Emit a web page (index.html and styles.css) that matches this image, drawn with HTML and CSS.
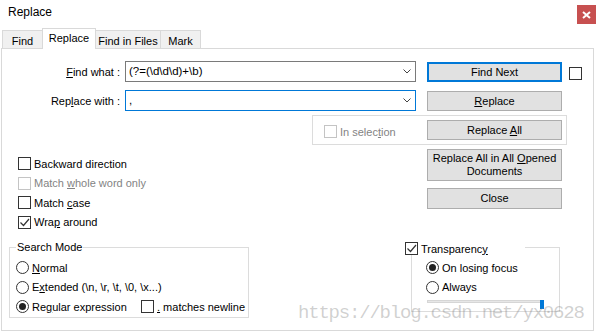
FILE: index.html
```html
<!DOCTYPE html>
<html lang="en">
<head>
    <meta charset="UTF-8">
    <meta name="viewport" content="width=device-width, initial-scale=1.0">
    <title>Replace</title>
    <link rel="stylesheet" href="styles.css">
</head>
<body>

<div class="dialog">
    <div class="titlebar">
        <span class="title">Replace</span>
        <span class="close-btn">
            <svg width="9" height="8" viewBox="0 0 9 8"><path d="M1 1 L8 7 M8 1 L1 7" stroke="#fff" stroke-width="2" fill="none"/></svg>
        </span>
    </div>

    <div class="tabs">
        <div class="tab tab-find">Find</div>
        <div class="tab tab-replace active">Replace</div>
        <div class="tab tab-files">Find in Files</div>
        <div class="tab tab-mark">Mark</div>
    </div>

    <div class="panel">
        <div class="row row-find">
            <div class="field">
                <label class="field-label"><u>F</u>ind what :</label>
                <div class="combo">
                    <span class="combo-text">(?=(\d\d\d)+\b)</span>
                    <svg class="chevron" width="8" height="5" viewBox="0 0 8 5"><path d="M0.5 0.5 L4 4 L7.5 0.5" stroke="#444" fill="none"/></svg>
                </div>
            </div>
            <button class="btn btn-default">Find Next</button>
            <span class="cb cb-side"></span>
        </div>

        <div class="row row-replace">
            <div class="field">
                <label class="field-label">Rep<u>l</u>ace with :</label>
                <div class="combo focused">
                    <span class="combo-text">,</span>
                    <svg class="chevron" width="8" height="5" viewBox="0 0 8 5"><path d="M0.5 0.5 L4 4 L7.5 0.5" stroke="#444" fill="none"/></svg>
                </div>
            </div>
            <button class="btn"><u>R</u>eplace</button>
        </div>

        <div class="selbox">
            <div class="sel-label disabled">
                <span class="cb"></span>
                <span class="opt-text">In selec<u>t</u>ion</span>
            </div>
            <button class="btn btn-sel">Replace <u>A</u>ll</button>
        </div>

        <div class="middle">
            <div class="options">
                <div class="opt"><span class="cb"></span><span class="opt-text">Backward direction</span></div>
                <div class="opt disabled"><span class="cb"></span><span class="opt-text">Match <u>w</u>hole word only</span></div>
                <div class="opt"><span class="cb"></span><span class="opt-text">Match <u>c</u>ase</span></div>
                <div class="opt"><span class="cb checked"><svg width="11" height="11" viewBox="0 0 11 11"><path d="M1.5 5.5 L4.5 8.5 L10 2" stroke="#333" stroke-width="1.2" fill="none"/></svg></span><span class="opt-text">Wra<u>p</u> around</span></div>
            </div>
            <div class="side-buttons">
                <button class="btn btn-tall">Replace All in All <u>O</u>pened<br>Documents</button>
                <button class="btn btn-close">Close</button>
            </div>
        </div>

        <div class="bottom">
            <fieldset class="search-mode">
                <legend>Search Mode</legend>
                <div class="opt"><span class="rb"></span><span class="opt-text"><u>N</u>ormal</span></div>
                <div class="opt"><span class="rb"></span><span class="opt-text">E<u>x</u>tended (\n, \r, \t, \0, \x...)</span></div>
                <div class="opt">
                    <span class="opt-first"><span class="rb on"></span><span class="opt-text">Re<u>g</u>ular expression</span></span>
                    <span class="cb"></span><span class="opt-text"><u>.</u> matches newline</span>
                </div>
            </fieldset>

            <div class="trans-group">
                <div class="trans-head">
                    <span class="cb checked"><svg width="11" height="11" viewBox="0 0 11 11"><path d="M1.5 5.5 L4.5 8.5 L10 2" stroke="#333" stroke-width="1.2" fill="none"/></svg></span>
                    <span class="opt-text">Transparenc<u>y</u></span>
                </div>
                <div class="opt"><span class="rb on"></span><span class="opt-text">On losing focus</span></div>
                <div class="opt"><span class="rb"></span><span class="opt-text">Always</span></div>
                <div class="slider">
                    <div class="track"></div>
                    <div class="thumb"></div>
                </div>
            </div>
        </div>
    </div>

    <div class="watermark">https://blog.csdn.net/yx0628</div>
</div>

</body>
</html>
```

FILE: styles.css
```css
body {
    margin: 0;
    background-color: #fff;
    font-family: "Liberation Sans", Arial, sans-serif;
    font-size: 11px;
    color: #000;
}

.dialog {
    position: relative;
    width: 596px;
    height: 332px;
    overflow: hidden;
    background-color: #fff;
}

/* title bar */
.titlebar {
    height: 28px;
    display: flex;
    justify-content: space-between;
    align-items: flex-start;
    padding-left: 8px;
}

.title {
    font-size: 12px;
    line-height: 15px;
    padding-top: 5px;
}

.close-btn {
    width: 19px;
    height: 19px;
    margin-top: 5px;
    background-color: #c75050;
    display: flex;
    align-items: center;
    justify-content: center;
}

/* tabs */
.tabs {
    height: 20px;
    display: flex;
    align-items: flex-start;
    padding-left: 2px;
}

.tab {
    box-sizing: border-box;
    height: 18px;
    margin-top: 2px;
    margin-right: -1px;
    border: 1px solid #d9d9d9;
    border-bottom: none;
    background-color: #f0f0f0;
    display: flex;
    align-items: center;
    justify-content: center;
    padding-top: 2px;
}

.tab.active {
    position: relative;
    z-index: 1;
    height: 21px;
    margin-top: 0;
    background-color: #fff;
    padding-top: 0;
    padding-bottom: 2px;
}

.tab-find { width: 41px; }
.tab-replace { width: 54px; }
.tab-files { width: 66px; }
.tab-mark { width: 41px; }

/* main panel */
.panel {
    box-sizing: border-box;
    width: 593px;
    height: 283px;
    margin-left: 1px;
    border: 1px solid #d9d9d9;
}

.row {
    display: flex;
    align-items: flex-start;
    height: 21px;
}

.row-find { margin-top: 12px; }
.row-replace { margin-top: 8px; }

.field {
    width: 425px;
    display: flex;
    align-items: center;
}

.field-label {
    width: 118px;
    margin-right: 5px;
    text-align: right;
}

.combo {
    box-sizing: border-box;
    width: 291px;
    height: 21px;
    border: 1px solid #7a7a7a;
    display: flex;
    align-items: center;
    justify-content: space-between;
    padding: 0 4px 0 3px;
}

.combo.focused {
    border-color: #0078d7;
}

.combo-text {
    line-height: 19px;
    font-size: 11.5px;
}

.btn {
    box-sizing: border-box;
    width: 135px;
    height: 20px;
    margin: 1px 0 0 0;
    padding: 0;
    border: 1px solid #adadad;
    background-color: #e1e1e1;
    font-family: inherit;
    font-size: 11px;
    color: #000;
    line-height: 13px;
    text-align: center;
}

.btn-default {
    border: 2px solid #0078d7;
}

.cb-side {
    margin: 6px 0 0 7px;
}

/* in selection box */
.selbox {
    box-sizing: border-box;
    width: 255px;
    height: 30px;
    margin: 4px 0 0 310px;
    border: 1px solid #dcdcdc;
    display: flex;
    align-items: flex-start;
}

.sel-label {
    box-sizing: border-box;
    width: 114px;
    padding-left: 11px;
    margin-top: 9px;
    display: flex;
    align-items: center;
    height: 13px;
}

.btn-sel {
    margin-top: 4px;
}

/* checkboxes and radios */
.cb {
    box-sizing: border-box;
    width: 13px;
    height: 13px;
    flex: none;
    border: 1px solid #333;
    background-color: #fff;
    display: inline-flex;
    align-items: center;
    justify-content: center;
}

.disabled {
    color: #838383;
}

.disabled .cb {
    border-color: #c4c4c4;
}

.rb {
    box-sizing: border-box;
    width: 13px;
    height: 13px;
    flex: none;
    border: 1px solid #333;
    border-radius: 50%;
    display: inline-flex;
    align-items: center;
    justify-content: center;
}

.rb.on::after {
    content: "";
    width: 7px;
    height: 7px;
    border-radius: 50%;
    background-color: #222;
}

.opt {
    height: 19.5px;
    display: flex;
    align-items: center;
}

.opt-text {
    margin-left: 3px;
    white-space: nowrap;
}

.opt-first {
    width: 125px;
    display: flex;
    align-items: center;
}

/* middle area */
.middle {
    height: 96px;
    display: flex;
    align-items: flex-start;
}

.options {
    box-sizing: border-box;
    width: 425px;
    padding: 9px 0 0 16px;
}

.side-buttons {
    display: flex;
    flex-direction: column;
    gap: 7px;
    margin-top: 4px;
}

.side-buttons .btn {
    margin: 0;
}

.btn-tall {
    height: 32px;
}

.btn-close {
    height: 21px !important;
}

/* bottom groups */
.bottom {
    display: flex;
    align-items: flex-start;
}

.search-mode {
    box-sizing: border-box;
    width: 240px;
    margin: 0 0 0 7px;
    padding: 5px 0 0 6px;
    min-width: 0;
    border: 1px solid #dcdcdc;
}

.search-mode legend {
    padding: 0 1px;
    line-height: 12px;
}

.trans-group {
    position: relative;
    box-sizing: border-box;
    width: 149px;
    height: 65px;
    margin: 6px 0 0 162px;
    padding: 10px 0 0 14px;
    border: 1px solid #dcdcdc;
}

.trans-head {
    position: absolute;
    top: -6px;
    left: -7px;
    width: 120px;
    height: 13px;
    background-color: #fff;
    display: flex;
    align-items: center;
}

.slider {
    position: relative;
    width: 117px;
    height: 9px;
    margin: 3px 0 0 1px;
}

.track {
    height: 3px;
    margin-top: 3px;
    background-color: #e7e7e7;
    border: 1px solid #d6d6d6;
    box-sizing: border-box;
}

.thumb {
    position: absolute;
    top: 0;
    right: 0;
    width: 4px;
    height: 9px;
    background-color: #0078d7;
}

.watermark {
    position: absolute;
    left: 298px;
    top: 303px;
    font-family: "Liberation Mono", "Courier New", monospace;
    font-size: 19px;
    line-height: 20px;
    letter-spacing: -1.2px;
    color: rgba(120, 120, 120, 0.35);
    white-space: nowrap;
}
```
